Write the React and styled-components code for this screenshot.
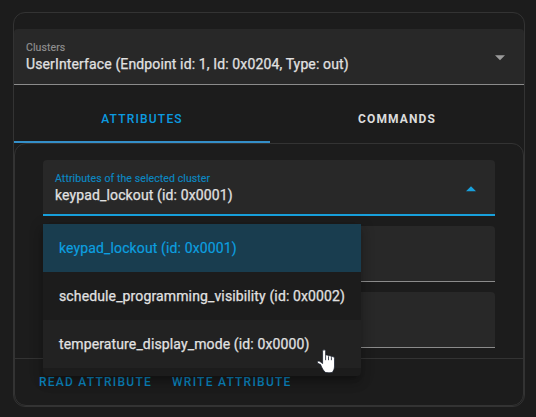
import React from "react";
import styled, { createGlobalStyle } from "styled-components";

const GlobalStyle = createGlobalStyle`
  * { box-sizing: border-box; }
  body {
    margin: 0;
    background: #1c1c1c;
    color: #e1e1e1;
    font-family: Roboto, "Liberation Sans", sans-serif;
    overflow: hidden;
  }
`;

const Page = styled.main`
  height: 417px;
  padding: 12px 11px 10px 13px;
`;

const Card = styled.section`
  height: 395px;
  padding-top: 16px;
  border: 1px solid #333;
  border-radius: 12px;
  display: flex;
  flex-direction: column;
`;

const InnerCard = styled.section`
  height: 263px;
  border: 1px solid #333;
  border-radius: 12px;
  display: flex;
  flex-direction: column;
`;

const Fields = styled.div`
  position: relative;
  height: 214px;
  padding: 16px 28px 0;
  display: flex;
  flex-direction: column;
  gap: 10px;
`;

const Field = styled.div`
  height: 56px;
  flex: none;
  padding: 11px 17px 0 12px;
  display: flex;
  justify-content: space-between;
  background: #282828;
  border-radius: 4px 4px 0 0;
  border-bottom: ${(p) => (p.$active ? "2px solid #18a0dc" : "1px solid #8b8b8b")};
`;

const Label = styled.div`
  height: 15px;
  line-height: 15px;
  font-size: 10.5px;
  letter-spacing: 0.09px;
  -webkit-text-stroke: 0.15px currentColor;
  color: ${(p) => (p.$active ? "#0b88c3" : "#919191")};
`;

const Value = styled.div`
  height: 18px;
  line-height: 18px;
  font-size: 14px;
  letter-spacing: 0.13px;
  -webkit-text-stroke: 0.25px currentColor;
  white-space: nowrap;
`;

const Arrow = styled.svg`
  width: 14px;
  height: 6px;
  margin-top: 15px;
  fill: ${(p) => (p.$active ? "#18a0dc" : "#9b9b9b")};
`;

const Tabs = styled.nav`
  height: 58px;
  flex: none;
  padding-top: 10px;
  display: grid;
  grid-template-columns: 256px 1fr;
`;

const Tab = styled.button`
  padding: 2px 0 0;
  border: 0;
  border-bottom: 2px solid ${(p) => (p.$active ? "#348fc9" : "transparent")};
  background: none;
  color: ${(p) => (p.$active ? "#0b9be0" : "#dcdcdc")};
  font: ${(p) => (p.$active ? 500 : 700)} 12px/44px Roboto, sans-serif;
  letter-spacing: ${(p) => (p.$active ? "1.2px" : "1.1px")};
`;

const Menu = styled.ul`
  position: absolute;
  z-index: 2;
  top: 80px;
  left: 28px;
  width: 318px;
  height: 152px;
  margin: 0;
  padding: 0;
  list-style: none;
  background: #1c1c1c;
  border-radius: 0 0 4px 4px;
  box-shadow: 0 5px 5px -3px rgba(0, 0, 0, 0.2), 0 8px 10px 1px rgba(0, 0, 0, 0.14),
    0 3px 14px 2px rgba(0, 0, 0, 0.12);
`;

const Option = styled.li`
  height: 48px;
  padding-left: 16px;
  font-size: 14px;
  line-height: 48px;
  letter-spacing: 0.13px;
  -webkit-text-stroke: ${(p) => (p.$selected ? "0.15px" : "0.25px")} currentColor;
  white-space: nowrap;
  color: ${(p) => (p.$selected ? "#0ca0e0" : "#e1e1e1")};
  background: ${(p) => (p.$selected ? "#193d4f" : p.$hover ? "#222" : "transparent")};
`;

const Pointer = styled.svg`
  position: absolute;
  z-index: 3;
  left: 302px;
  top: 205px;
  width: 19px;
  height: 25px;
`;

const Actions = styled.footer`
  height: 47px;
  border-top: 1px solid #333;
  padding: 5px 16px 0;
  display: flex;
  gap: 4px;
`;

const Action = styled.button`
  height: 36px;
  padding: 0 8px;
  border: 0;
  background: none;
  color: #0b88c3;
  font: 500 12px/36px Roboto, sans-serif;
  letter-spacing: 1.25px;
  white-space: nowrap;
`;

function Select({ label, value, active }) {
  return (
    <Field $active={active}>
      <div>
        <Label $active={active}>{label}</Label>
        <Value>{value}</Value>
      </div>
      <Arrow $active={active} viewBox="0 0 14 6">
        <path d={active ? "M2 5.2 7 .2l5 5z" : "M2 .2h10l-5 5z"} />
      </Arrow>
    </Field>
  );
}

export default function App() {
  return (
    <Page>
      <GlobalStyle />
      <Card>
        <Select label="Clusters" value="UserInterface (Endpoint id: 1, Id: 0x0204, Type: out)" />
        <Tabs>
          <Tab $active>ATTRIBUTES</Tab>
          <Tab>COMMANDS</Tab>
        </Tabs>
        <InnerCard>
          <Fields>
            <Select active label="Attributes of the selected cluster" value="keypad_lockout (id: 0x0001)" />
            <Field />
            <Field />
            <Menu>
              <Option $selected>keypad_lockout (id: 0x0001)</Option>
              <Option>schedule_programming_visibility (id: 0x0002)</Option>
              <Option $hover>temperature_display_mode (id: 0x0000)</Option>
            </Menu>
            <Pointer viewBox="0 0 19 25">
              <path
                d="M5.6 2.2c0-1.9 3-1.9 3 0v4.2c.7-.7 2.6-.5 2.9.6.8-.5 2.5-.3 2.8.7 1.2-.5 3.2.1 3.2 1.8v7.6c0 3-1 4.2-2 6.2-1.6.6-5.4.6-7.4 0-1.5-1.8-2.5-3.1-3.5-5.300l-1-2.400-2.900-1.400c-1-1.600.7-2.700 2.200-1.800l2.700 2.200z"
                fill="#fff"
                stroke="#111827"
                strokeWidth=".7"
              />
              <path d="M8.6 6.5v4.7M11.5 7.4v3.8M14.400 8.200v3" stroke="#111827" strokeWidth=".8" />
            </Pointer>
          </Fields>
          <Actions>
            <Action>READ ATTRIBUTE</Action>
            <Action>WRITE ATTRIBUTE</Action>
          </Actions>
        </InnerCard>
      </Card>
    </Page>
  );
}
